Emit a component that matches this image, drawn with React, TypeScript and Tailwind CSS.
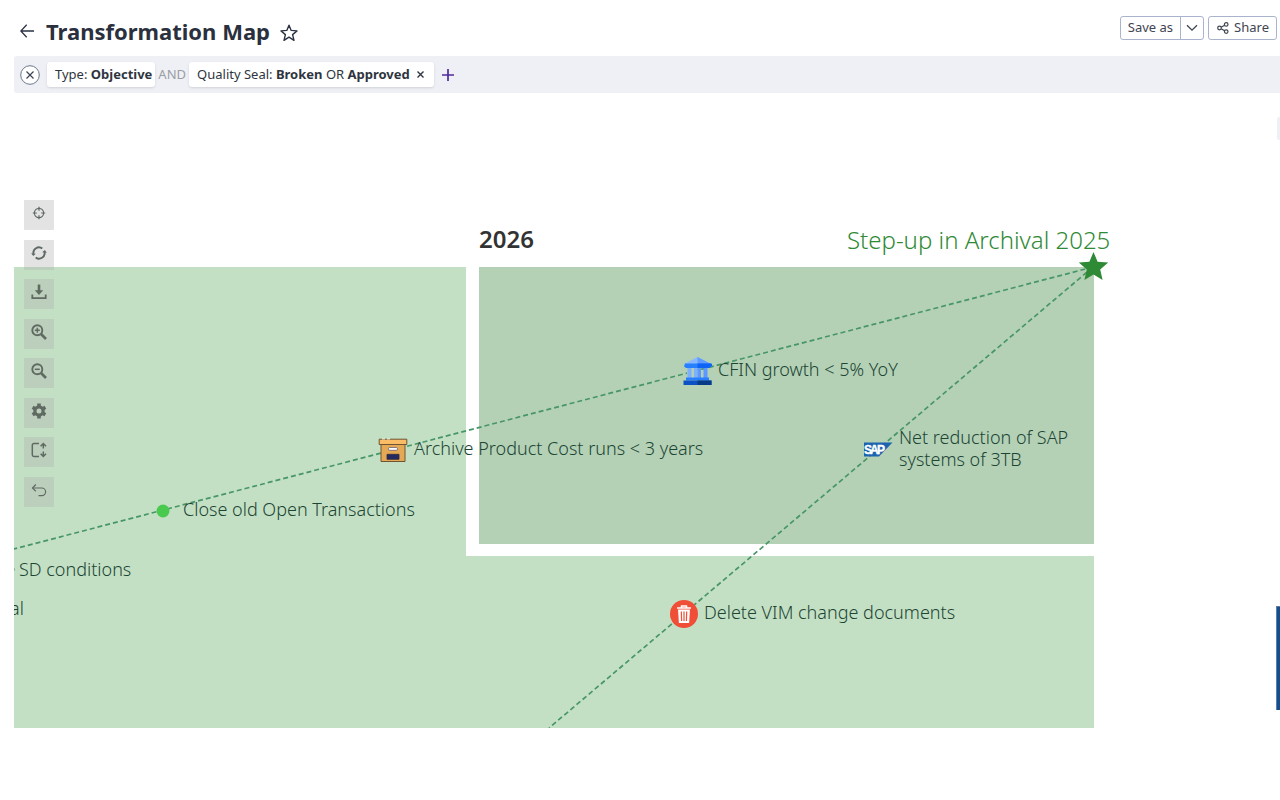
import type { ReactNode } from 'react';

interface MapLabelProps {
  className: string;
  children: ReactNode;
}

const toolButtonClass =
  'flex h-[30px] w-[30px] shrink-0 items-start justify-center bg-[#aeaeae]/35 pt-1 text-[#5f6a62]';

const MapLabel = ({ className, children }: MapLabelProps) => (
  <span className={`absolute whitespace-nowrap text-[18px] leading-[22px] font-light text-[#1c4534] ${className}`}>
    {children}
  </span>
);

const ToolIcon = ({ children }: { children: ReactNode }) => (
  <svg width="18" height="18" viewBox="0 0 18 18" fill="none" stroke="currentColor" strokeWidth="1.5">
    {children}
  </svg>
);

const tools = [
  {
    name: 'Center',
    icon: (
      <g strokeWidth="1.2">
        <circle cx="9" cy="9" r="4.6" />
        <path d="M9 2.8v4M9 11.2v4M2.800 9h4M11.200 9h4" />
      </g>
    ),
  },
  {
    name: 'Refresh',
    icon: (
      <>
        <path d="M3.5 10a5.5 5.5 0 0 1 8.8-5.4M14.5 8a5.5 5.5 0 0 1-8.8 5.4" strokeWidth="1.9" />
        <path d="M1.200 9.200L3.200 12l2.600-2.200zM12.200 8.200l2.600-2.200 2 2.800z" fill="currentColor" stroke="none" />
      </>
    ),
  },
  {
    name: 'Download',
    icon: (
      <>
        <path d="M2.300 11.500v3.700h13.400v-3.700" strokeWidth="1.800" />
        <path d="M9 1.500V8" strokeWidth="2.600" />
        <path d="M4.800 7.200h8.400L9 12z" fill="currentColor" stroke="none" />
      </>
    ),
  },
  {
    name: 'Zoom in',
    icon: (
      <>
        <circle cx="7.3" cy="7.3" r="5" strokeWidth="1.9" />
        <path d="M4.8 7.3h5M7.3 4.8v5" />
        <path d="M11 11l5 5" strokeWidth="2.6" />
      </>
    ),
  },
  {
    name: 'Zoom out',
    icon: (
      <>
        <circle cx="7.3" cy="7.3" r="5" strokeWidth="1.9" />
        <path d="M4.8 7.3h5" />
        <path d="M11 11l5 5" strokeWidth="2.6" />
      </>
    ),
  },
  {
    name: 'Settings',
    icon: (
      <>
        <circle cx="9" cy="9" r="4.1" strokeWidth="3.2" />
        <path d="M9 1.6v2.6M9 13.8v2.6M2.6 5.3l2.2 1.3M13.2 11.4l2.2 1.3M2.6 12.7l2.2-1.3M13.2 6.6l2.2-1.3" strokeWidth="3.6" />
      </>
    ),
  },
  {
    name: 'Fit height',
    icon: (
      <>
        <path d="M9 2.500H4Q2.300 2.500 2.300 4.200v9.600q0 1.700 1.700 1.700h5" />
        <path d="M13.300 2.500v5M10.600 5.200l2.700-2.700L16 5.200M13.300 10.500v5M10.600 12.800l2.700 2.700 2.700-2.700" />
      </>
    ),
  },
  {
    name: 'Undo',
    icon: (
      <g strokeWidth="1.2">
        <path d="M2.5 7h9.3a3.8 3.8 0 0 1 0 7.6H8.5" />
        <path d="M5.8 3.5L2.5 7l3.3 3.2" />
      </g>
    ),
  },
];

const Header = () => (
  <header className="flex h-14 items-start justify-between pr-[3px] pl-5">
    <div className="flex items-center pt-[15px]">
      <button type="button" aria-label="Back" className="mr-3">
        <svg width="14" height="14" viewBox="0 0 14 14" fill="none" stroke="#2a3244" strokeWidth="1.3">
          <path d="M6.7.8L.8 7l5.9 6.2M.8 7H14" />
        </svg>
      </button>
      <h1 className="text-[22px] leading-8 font-bold text-[#2a303d]">Transformation Map</h1>
      <button type="button" aria-label="Add to favorites" className="ml-[10px] pt-1">
        <svg width="18" height="18" viewBox="0 0 18 18" fill="none" stroke="#2a3244" strokeWidth="1.4" strokeLinejoin="round">
          <path d="M9 1.2l2.2 5.2 5.8.5-4.4 3.7 1.4 5.7L9 13.2l-5 3.1 1.4-5.7L1 6.9l5.8-.5z" />
        </svg>
      </button>
    </div>
    <div className="flex gap-1 pt-4 text-[13px] text-[#3f4550]">
      <div className="flex h-6 rounded-[3px] border border-[#a9b4cc]">
        <button type="button" className="px-[7px]">Save as</button>
        <button type="button" aria-label="More save options" className="flex w-[23px] items-center justify-center border-l border-[#a9b4cc]">
          <svg width="12" height="8" viewBox="0 0 12 8" fill="none" stroke="currentColor" strokeWidth="1.3">
            <path d="M1 1.2l5 5 5-5" />
          </svg>
        </button>
      </div>
      <button type="button" className="flex h-6 items-center gap-[5px] rounded-[3px] border border-[#a9b4cc] pr-[7px] pl-2">
        <svg width="12" height="12" viewBox="0 0 12 12" fill="none" stroke="currentColor" strokeWidth="1.2">
          <circle cx="2.5" cy="6" r="1.8" />
          <circle cx="9.2" cy="2.4" r="1.8" />
          <circle cx="9.2" cy="9.6" r="1.8" />
          <path d="M4.1 5.2l3.5-2M4.1 6.8l3.5 2" />
        </svg>
        Share
      </button>
    </div>
  </header>
);

const FilterBar = () => (
  <div className="ml-[14px] flex h-[37px] items-center rounded-l-[3px] bg-[#eff0f5] pl-[6px] text-[13px] text-[#2f3540]">
    <button type="button" aria-label="Clear filters" className="mr-[7px]">
      <svg width="20" height="20" viewBox="0 0 20 20" fill="none" stroke="#3a4353" strokeWidth="1.2">
        <circle cx="10" cy="10" r="9.3" fill="#fff" stroke="#6b778c" strokeWidth="1" />
        <path d="M6.5 6.5l7 7M13.5 6.5l-7 7" />
      </svg>
    </button>
    <button type="button" className="h-[25px] rounded-[3px] bg-white pr-[3px] pl-2 shadow">
      Type: <b>Objective</b>
    </button>
    <span className="mx-[3px] text-[#9a9da3]">AND</span>
    <div className="flex h-[25px] items-center rounded-[3px] bg-white pl-2 shadow">
      <span>
        Quality Seal: <b>Broken</b> OR <b>Approved</b>
      </span>
      <button type="button" aria-label="Remove filter" className="pr-[10px] pl-[7px]">
        <svg width="7" height="7" viewBox="0 0 7 7" stroke="#2f3540" strokeWidth="1.4">
          <path d="M.5.5l6 6M6.5.5l-6 6" />
        </svg>
      </button>
    </div>
    <button type="button" aria-label="Add filter" className="ml-2">
      <svg width="12" height="12" viewBox="0 0 12 12" stroke="#4f2a9c" strokeWidth="1.7">
        <path d="M6 0v12M0 6h12" />
      </svg>
    </button>
  </div>
);

const Toolbar = () => (
  <div className="absolute top-[107px] left-[10px] flex h-[307px] flex-col justify-between">
    {tools.map((tool) => (
      <button key={tool.name} type="button" aria-label={tool.name} className={toolButtonClass}>
        <ToolIcon>{tool.icon}</ToolIcon>
      </button>
    ))}
  </div>
);

const BankIcon = () => (
  <svg className="absolute top-[263px] left-[669px]" width="29" height="30" viewBox="0 0 29 30">
    <path d="M4 14h21v10H4z" fill="#b4d1b6" />
    <path d="M14.5 1L28 8H1z" fill="#8ab8ff" />
    <path d="M14.5 1L28 8H14.5z" fill="#5f9bff" />
    <path d="M2 7.500h25a1.500 1.500 0 0 1 1 3L26 12H3L1 10.500z" fill="#2680ff" />
    <path d="M14.500 7.500H27a1.500 1.500 0 0 1 1 3L26 12H14.500z" fill="#0f64f5" />
    <path d="M4.500 12h4v12h-4zM11 12h3.500v12H11z" fill="#7db0ff" />
    <path d="M14.500 12H18v12h-3.500zM20.500 12h4v12h-4z" fill="#5b98ff" />
    <path d="M3 21.500h23v3H3z" fill="#2a7fff" />
    <path d="M.5 24.500h28v4.500H.5z" fill="#0b50c4" />
    <path d="M14.500 24.500h14v4.500h-14z" fill="#063a86" />
  </svg>
);

const ArchiveIcon = () => (
  <svg className="absolute top-[345px] left-[364px]" width="30" height="25" viewBox="0 0 30 25">
    <path d="M3 6h24v17.500H3z" fill="#e5a955" stroke="#6e5433" strokeWidth="1" />
    <path d="M1.200 1.200h27.600v5.300H1.200z" fill="#fbbc66" stroke="#6e5433" strokeWidth="1" />
    <path d="M4 .8h3M9 .8h3" stroke="#d9e6cd" strokeWidth="1.600" />
    <rect x="10.500" y="9.500" width="9" height="2.800" rx="1.200" fill="#fff" stroke="#6b6370" strokeWidth=".8" />
    <path d="M9 16.300h12v5H9z" fill="#252b62" stroke="#2c2a3a" strokeWidth=".8" />
  </svg>
);

const SapLogo = () => (
  <svg className="absolute top-[349px] left-[850px]" width="29" height="15" viewBox="0 0 29 15">
    <path d="M0 .5h28.500L15 14.500H0z" fill="#1c63b0" />
    <text y="12" fill="#fff" fontSize="12" fontWeight="700" fontFamily="Liberation Sans, sans-serif" stroke="#fff" strokeWidth=".4">
      <tspan x="0">S</tspan>
      <tspan x="6">A</tspan>
      <tspan x="13">P</tspan>
    </text>
  </svg>
);

const TrashIcon = () => (
  <svg className="absolute top-[507px] left-[656px]" width="28" height="28" viewBox="0 0 28 28">
    <circle cx="14" cy="14" r="14" fill="#f04e37" />
    <path d="M7 8h14M11.500 7.500V6h5v1.500" fill="none" stroke="#fff" strokeWidth="1.500" />
    <path d="M8 9.500h12l-.9 13.500H8.900z" fill="#fff" />
    <path d="M11.300 11.500l.3 9.500M14 11.500V21M16.700 11.500l-.3 9.500" stroke="#f04e37" strokeWidth="1.200" />
  </svg>
);

const TransformationMap = () => (
  <main className="relative ml-[14px] h-[635px] overflow-hidden">
    <div className="w-[1080px] pt-[174px]">
      <div className="flex h-[461px] items-start justify-end bg-[#c4e0c4]">
        <div className="h-[289px] w-[628px] border-b-[12px] border-l-[13px] border-white bg-[#b4d1b6]" />
      </div>
    </div>

    <svg className="absolute top-0 left-0" width="1110" height="635" fill="none">
      <g stroke="#489668" strokeWidth="1.700" strokeDasharray="5 3">
        <path d="M1079 174L0 456" />
        <path d="M1079 174L535 635" />
      </g>
      <circle cx="149" cy="418" r="6.500" fill="#49c94e" />
      <path
        d="M1079.500 159l4.100 9.700 10.600.9-8 7 2.400 10.400-9.100-5.500-9.100 5.500 2.400-10.400-8-7 10.600-.9z"
        fill="#2f8a35"
      />
    </svg>

    <h2 className="absolute top-[130px] left-[465px] text-2xl leading-8 font-semibold text-[#333]">2026</h2>
    <h2 className="absolute top-[131px] left-[833px] whitespace-nowrap text-2xl leading-8 font-light text-[#2f8a35]">
      Step-up in Archival 2025
    </h2>

    <BankIcon />
    <ArchiveIcon />
    <SapLogo />
    <TrashIcon />

    <MapLabel className="top-[265px] left-[704px]">CFIN growth &lt; 5% YoY</MapLabel>
    <MapLabel className="top-[344px] left-[400px]">Archive Product Cost runs &lt; 3 years</MapLabel>
    <MapLabel className="top-[333px] left-[885px]">
      Net reduction of SAP
      <br />
      systems of 3TB
    </MapLabel>
    <MapLabel className="top-[405px] left-[169px]">Close old Open Transactions</MapLabel>
    <MapLabel className="top-[508px] left-[690px]">Delete VIM change documents</MapLabel>
    <MapLabel className="top-[465px] left-[5px]">SD conditions</MapLabel>
    <MapLabel className="top-[504px] -left-[4px]">al</MapLabel>
    <span className="absolute top-[475px] -left-[2px] h-[3px] w-[3px] rounded-full bg-[#7fb08c]" />

    <Toolbar />
    <div className="absolute top-[24px] right-0 h-[23px] w-[3px] rounded-l-[2px] bg-[#eff0f5]" />
    <div className="absolute top-[513px] right-0 h-[104px] w-1 border-t border-l border-[#5f7cab] bg-[#124f8c]" />
  </main>
);

export default function App() {
  return (
    <div className="min-h-screen bg-white font-['Noto_Sans','Open_Sans',sans-serif]">
      <Header />
      <FilterBar />
      <TransformationMap />
    </div>
  );
}
